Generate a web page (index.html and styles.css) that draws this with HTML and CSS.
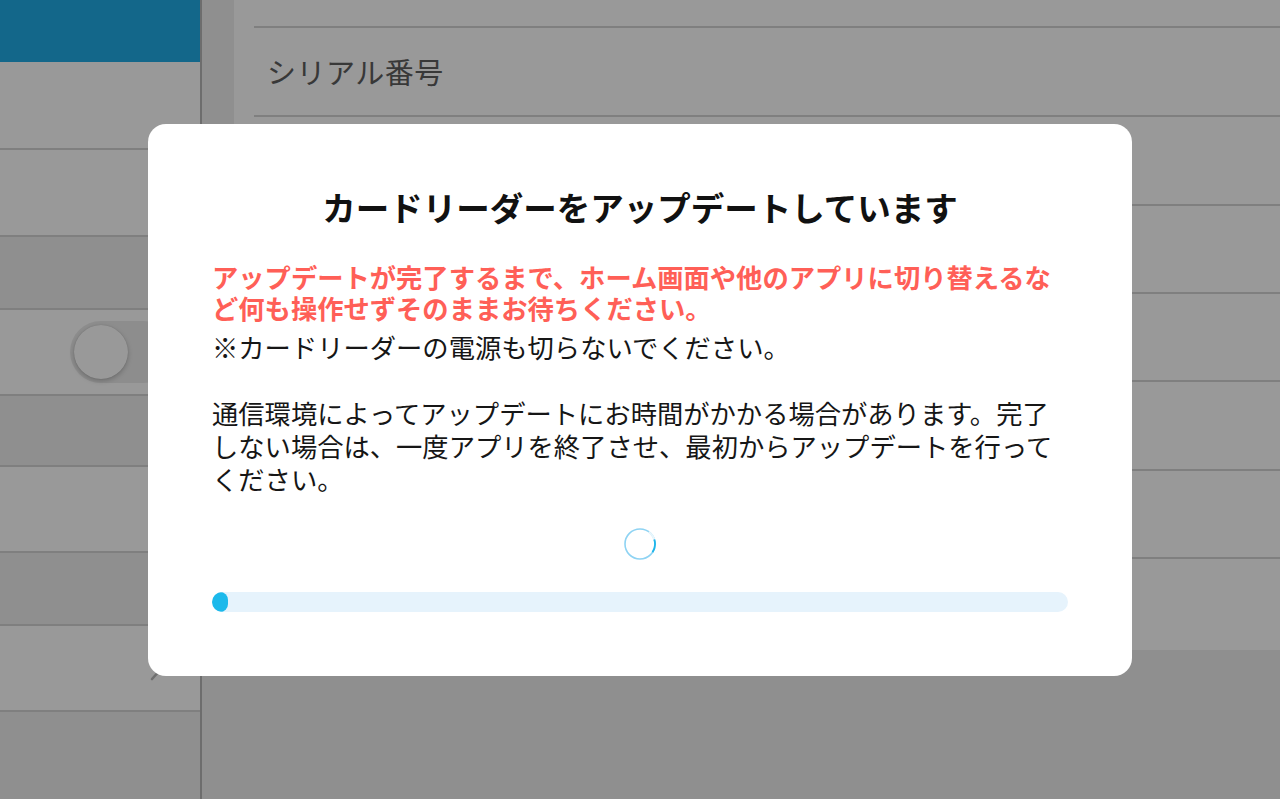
FILE: index.html
```html
<!DOCTYPE html>
<html lang="ja">
<head>
<meta charset="utf-8">
<title>カードリーダーのアップデート</title>
<link rel="stylesheet" href="styles.css">
</head>
<body>
<div class="app">
  <aside class="sidebar">
    <div class="sb-header"></div>
    <div class="sb-row item h88"></div>
    <div class="sb-row item h87"></div>
    <div class="sb-row section h73"></div>
    <div class="sb-row item h86 toggle-row">
      <span class="toggle"><span class="knob"></span></span>
    </div>
    <div class="sb-row section h71"></div>
    <div class="sb-row item h86"></div>
    <div class="sb-row section h73"></div>
    <div class="sb-row item h86 chevron-row">
      <svg class="chevron" width="16" height="28" viewBox="0 0 16 28"><path d="M3 3 L13 14 L3 25" fill="none" stroke="#b9b9b9" stroke-width="2.6" stroke-linecap="round" stroke-linejoin="round"/></svg>
    </div>
  </aside>
  <main class="main">
    <section class="panel">
      <div class="p-row r28"></div>
      <div class="p-row r89"><span class="p-label">シリアル番号</span></div>
      <div class="p-row r89"></div>
      <div class="p-row r88"></div>
      <div class="p-row r88"></div>
      <div class="p-row r89"></div>
      <div class="p-row r88"></div>
      <div class="p-row last"></div>
    </section>
  </main>
</div>

<div class="overlay">
  <div class="modal">
    <h1 class="m-title">カードリーダーをアップデートしています</h1>
    <p class="m-warn">アップデートが完了するまで、ホーム画面や他のアプリに切り替えるなど何も操作せずそのままお待ちください。</p>
    <p class="m-text">※カードリーダーの電源も切らないでください。<br><br>通信環境によってアップデートにお時間がかかる場合があります。完了しない場合は、一度アプリを終了させ、最初からアップデートを行ってください。</p>
    <div class="m-spinner">
      <svg width="32" height="32" viewBox="0 0 32 32">
        <circle cx="16" cy="16" r="15" fill="none" stroke="#8ed3f3" stroke-width="1.6"/>
        <path d="M24.8 3.9 A15 15 0 0 1 30.3 11.6" fill="none" stroke="#e8f6fc" stroke-width="2"/>
        <path d="M30.3 11.6 A15 15 0 0 1 28.5 24.3" fill="none" stroke="#1db5ea" stroke-width="1.8"/>
      </svg>
    </div>
    <div class="m-progress"><div class="m-fill" style="width:16px"></div></div>
  </div>
</div>
</body>
</html>
```

FILE: styles.css
```css
* { box-sizing: border-box; }
html, body { margin: 0; padding: 0; }
body {
  width: 1280px;
  height: 799px;
  overflow: hidden;
  font-family: "Noto Sans CJK JP", "Noto Sans", sans-serif;
  background: #eeeeee;
}
.app {
  display: flex;
  height: 799px;
}
.sidebar {
  width: 202px;
  flex: none;
  border-right: 2px solid #b6b6b6;
  background: #eeeeee;
  display: flex;
  flex-direction: column;
}
.sb-header {
  height: 62px;
  background: #20ace6;
}
.sb-row {
  border-bottom: 2px solid #d4d4d4;
  position: relative;
}
.sb-row.item { background: #ffffff; }
.sb-row.section { background: #eeeeee; }
.h88 { height: 88px; }
.h87 { height: 87px; }
.h86 { height: 86px; }
.h73 { height: 73px; }
.h71 { height: 71px; }
.toggle-row {
  display: flex;
  align-items: center;
  padding-left: 70px;
  overflow: hidden;
}
.toggle {
  width: 104px;
  height: 62px;
  border-radius: 31px;
  background: #ebebeb;
  display: flex;
  align-items: center;
  padding-left: 4px;
  flex: none;
}
.knob {
  width: 54px;
  height: 54px;
  border-radius: 50%;
  background: #ffffff;
  box-shadow: 0 2px 5px rgba(0,0,0,0.22), 0 0 1px rgba(0,0,0,0.2);
}
.chevron-row {
  display: flex;
  align-items: center;
  justify-content: flex-end;
  padding-right: 35px;
}
.main {
  flex: 1;
  background: #eeeeee;
  padding-left: 32px;
}
.panel {
  background: #ffffff;
  height: 650px;
  display: flex;
  flex-direction: column;
}
.p-row {
  margin-left: 20px;
  border-bottom: 2px solid #d4d4d4;
  display: flex;
  align-items: center;
  padding-left: 13px;
}
.r28 { height: 28px; }
.r89 { height: 89px; }
.r88 { height: 88px; }
.p-row.last { flex: 1; border-bottom: none; }
.p-label {
  font-size: 29px;
  color: #5e5e5e;
  letter-spacing: 0.5px;
  margin-top: -2px;
}
.overlay {
  position: fixed;
  inset: 0;
  background: rgba(0,0,0,0.4);
  display: flex;
  align-items: center;
  justify-content: center;
}
.modal {
  width: 984px;
  height: 552px;
  background: #ffffff;
  border-radius: 18px;
  padding: 60px 64px 0;
  display: flex;
  flex-direction: column;
}
.m-title {
  margin: 0;
  font-size: 33.5px;
  line-height: 46px;
  font-weight: 700;
  text-align: center;
  color: #111111;
}
.m-warn {
  margin: 31px 0 0;
  font-size: 26.3px;
  line-height: 31px;
  font-weight: 700;
  color: #ff5f57;
}
.m-text {
  margin: 7px 0 0;
  font-size: 26.3px;
  line-height: 33px;
  color: #161616;
}
.m-spinner {
  margin-top: 33px;
  height: 32px;
  display: flex;
  justify-content: center;
}
.m-progress {
  margin-top: 32px;
  height: 20px;
  border-radius: 10px;
  background: #e6f3fc;
  overflow: hidden;
}
.m-fill {
  height: 20px;
  border-radius: 10px;
  background: #1cb9eb;
}
```
